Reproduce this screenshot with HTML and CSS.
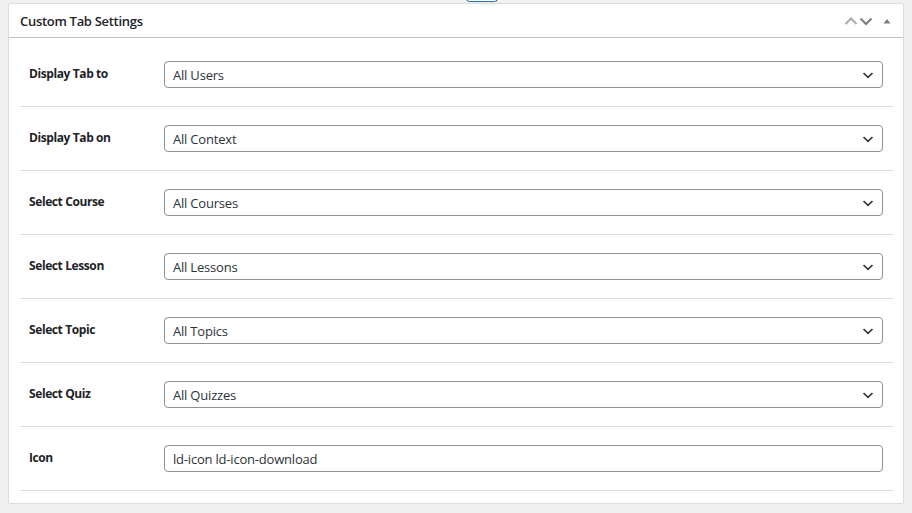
FILE: index.html
```html
<!DOCTYPE html>
<html>
<head>
<meta charset="utf-8">
<link rel="stylesheet" href="styles.css">
</head>
<body>
<div class="tabnub"></div>
<div class="postbox">
  <div class="postbox-header">
    <h2 class="hndle">Custom Tab Settings</h2>
    <div class="handle-actions">
      <svg class="ico up" width="14" height="10" viewBox="0 0 14 10"><path d="M1.5 8 L7 2.5 L12.5 8" fill="none" stroke="#a7aaad" stroke-width="2"/></svg>
      <svg class="ico down" width="14" height="10" viewBox="0 0 14 10"><path d="M1.5 2.5 L7 8 L12.5 2.5" fill="none" stroke="#787c82" stroke-width="2"/></svg>
      <svg class="ico tri" width="10" height="10" viewBox="0 0 10 10"><path d="M1.5 7.5 L5 3 L8.5 7.5 Z" fill="#787c82"/></svg>
    </div>
  </div>
  <div class="inside">
    <div class="row"><div class="label">Display Tab to</div><div class="field"><div class="select">All Users<svg class="chev" width="12" height="8" viewBox="0 0 12 8"><path d="M1.5 2 L6 6.3 L10.5 2" fill="none" stroke="#2c3338" stroke-width="1.6"/></svg></div></div></div>
    <div class="row"><div class="label">Display Tab on</div><div class="field"><div class="select">All Context<svg class="chev" width="12" height="8" viewBox="0 0 12 8"><path d="M1.5 2 L6 6.3 L10.5 2" fill="none" stroke="#2c3338" stroke-width="1.6"/></svg></div></div></div>
    <div class="row"><div class="label">Select Course</div><div class="field"><div class="select">All Courses<svg class="chev" width="12" height="8" viewBox="0 0 12 8"><path d="M1.5 2 L6 6.3 L10.5 2" fill="none" stroke="#2c3338" stroke-width="1.6"/></svg></div></div></div>
    <div class="row"><div class="label">Select Lesson</div><div class="field"><div class="select">All Lessons<svg class="chev" width="12" height="8" viewBox="0 0 12 8"><path d="M1.5 2 L6 6.3 L10.5 2" fill="none" stroke="#2c3338" stroke-width="1.6"/></svg></div></div></div>
    <div class="row"><div class="label">Select Topic</div><div class="field"><div class="select">All Topics<svg class="chev" width="12" height="8" viewBox="0 0 12 8"><path d="M1.5 2 L6 6.3 L10.5 2" fill="none" stroke="#2c3338" stroke-width="1.6"/></svg></div></div></div>
    <div class="row"><div class="label">Select Quiz</div><div class="field"><div class="select">All Quizzes<svg class="chev" width="12" height="8" viewBox="0 0 12 8"><path d="M1.5 2 L6 6.3 L10.5 2" fill="none" stroke="#2c3338" stroke-width="1.6"/></svg></div></div></div>
    <div class="row"><div class="label">Icon</div><div class="field"><div class="input">ld-icon ld-icon-download</div></div></div>
  </div>
</div>
</body>
</html>
```
FILE: styles.css
```css
html, body {
  margin: 0;
  padding: 0;
  background: #f0f0f1;
  font-family: "Open Sans", "Noto Sans", sans-serif;
  color: #1d2327;
}
body {
  padding: 3px 8px 0 8px;
  position: relative;
  height: 510px;
}
.tabnub {
  position: absolute;
  left: 466px;
  top: -2px;
  width: 30px;
  height: 3px;
  border: 1px solid #2271b1;
  border-top: none;
  border-radius: 0 0 4px 4px;
  background: #fff;
}
.postbox {
  background: #fff;
  border: 1px solid #dcdcde;
  border-radius: 2px;
  box-sizing: border-box;
  width: 896px;
}
.postbox-header {
  display: flex;
  align-items: center;
  justify-content: space-between;
  height: 33px;
  border-bottom: 1px solid #c3c4c7;
  padding: 0 11px;
}
.hndle {
  margin: 0;
  font-size: 13px;
  font-weight: 600;
  color: #1d2327;
  letter-spacing: -0.3px;
}
.handle-actions {
  display: flex;
  align-items: center;
}
.ico { display: block; }
.ico.down { margin-left: 1px; }
.ico.tri { margin-left: 9px; }
.inside {
  padding: 5px 10px 12px 11px;
}
.row {
  display: flex;
  border-bottom: 1px solid #dcdcde;
  height: 63px;
}
.label {
  width: 144px;
  padding: 22px 0 0 9px;
  box-sizing: border-box;
  font-size: 12px;
  font-weight: 700;
  color: #1d2327;
  letter-spacing: -0.4px;
}
.field {
  flex: 1;
  padding: 18px 0 0 0;
  margin-right: 10px;
}
.select, .input {
  height: 27px;
  box-sizing: border-box;
  border: 1px solid #8c8f94;
  border-radius: 4px;
  padding: 0 8px;
  display: flex;
  align-items: center;
  justify-content: space-between;
  font-size: 13px;
  color: #2c3338;
  letter-spacing: -0.2px;
}
.chev { display: block; }
```
